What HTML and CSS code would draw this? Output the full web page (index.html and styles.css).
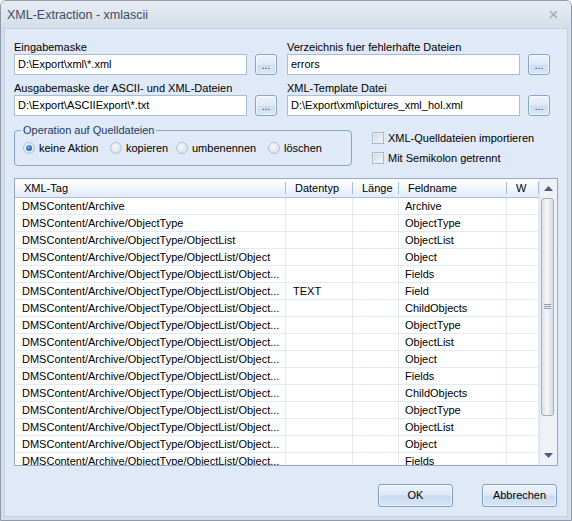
FILE: index.html
```html
<!DOCTYPE html>
<html>
<head>
<meta charset="utf-8">
<title>XML-Extraction - xmlascii</title>
<link rel="stylesheet" href="styles.css">
</head>
<body>
<div class="window">
  <div class="titlebar">
    <span class="title">XML-Extraction - xmlascii</span>
    <svg class="close" width="9" height="9" viewBox="0 0 9 9"><path d="M1 1 L8 8 M8 1 L1 8" stroke="#a3adbb" stroke-width="1.6"/></svg>
  </div>
  <div class="frame">
    <div class="client">
      <div class="paths">
        <div class="field">
          <div class="label">Eingabemaske</div>
          <div class="inrow"><div class="input">D:\Export\xml\*.xml</div><div class="browse">...</div></div>
        </div>
        <div class="field">
          <div class="label">Verzeichnis fuer fehlerhafte Dateien</div>
          <div class="inrow"><div class="input">errors</div><div class="browse">...</div></div>
        </div>
        <div class="field">
          <div class="label">Ausgabemaske der ASCII- und XML-Dateien</div>
          <div class="inrow"><div class="input">D:\Export\ASCIIExport\*.txt</div><div class="browse">...</div></div>
        </div>
        <div class="field">
          <div class="label">XML-Template Datei</div>
          <div class="inrow"><div class="input">D:\Export\xml\pictures_xml_hol.xml</div><div class="browse">...</div></div>
        </div>
      </div>

      <div class="options">
        <div class="group">
          <span class="legend">Operation auf Quelldateien</span>
          <div class="radio-item"><span class="radio checked"></span><span>keine Aktion</span></div>
          <div class="radio-item"><span class="radio"></span><span>kopieren</span></div>
          <div class="radio-item"><span class="radio"></span><span>umbenennen</span></div>
          <div class="radio-item"><span class="radio"></span><span>löschen</span></div>
        </div>
        <div class="checks">
          <div class="check-item"><span class="checkbox"></span><span>XML-Quelldateien importieren</span></div>
          <div class="check-item"><span class="checkbox"></span><span>Mit Semikolon getrennt</span></div>
        </div>
      </div>

      <div class="grid">
        <div class="table">
          <div class="head">
            <div class="hc c1">XML-Tag</div>
            <div class="hc c2">Datentyp</div>
            <div class="hc c3">Länge</div>
            <div class="hc c4">Feldname</div>
            <div class="hc c5">W</div>
          </div>
          <div class="body">
            <div class="row"><div class="c c1">DMSContent/Archive</div><div class="c c2"></div><div class="c c3"></div><div class="c c4">Archive</div><div class="c c5"></div></div>
            <div class="row"><div class="c c1">DMSContent/Archive/ObjectType</div><div class="c c2"></div><div class="c c3"></div><div class="c c4">ObjectType</div><div class="c c5"></div></div>
            <div class="row"><div class="c c1">DMSContent/Archive/ObjectType/ObjectList</div><div class="c c2"></div><div class="c c3"></div><div class="c c4">ObjectList</div><div class="c c5"></div></div>
            <div class="row"><div class="c c1">DMSContent/Archive/ObjectType/ObjectList/Object</div><div class="c c2"></div><div class="c c3"></div><div class="c c4">Object</div><div class="c c5"></div></div>
            <div class="row"><div class="c c1">DMSContent/Archive/ObjectType/ObjectList/Object...</div><div class="c c2"></div><div class="c c3"></div><div class="c c4">Fields</div><div class="c c5"></div></div>
            <div class="row"><div class="c c1">DMSContent/Archive/ObjectType/ObjectList/Object...</div><div class="c c2">TEXT</div><div class="c c3"></div><div class="c c4">Field</div><div class="c c5"></div></div>
            <div class="row"><div class="c c1">DMSContent/Archive/ObjectType/ObjectList/Object...</div><div class="c c2"></div><div class="c c3"></div><div class="c c4">ChildObjects</div><div class="c c5"></div></div>
            <div class="row"><div class="c c1">DMSContent/Archive/ObjectType/ObjectList/Object...</div><div class="c c2"></div><div class="c c3"></div><div class="c c4">ObjectType</div><div class="c c5"></div></div>
            <div class="row"><div class="c c1">DMSContent/Archive/ObjectType/ObjectList/Object...</div><div class="c c2"></div><div class="c c3"></div><div class="c c4">ObjectList</div><div class="c c5"></div></div>
            <div class="row"><div class="c c1">DMSContent/Archive/ObjectType/ObjectList/Object...</div><div class="c c2"></div><div class="c c3"></div><div class="c c4">Object</div><div class="c c5"></div></div>
            <div class="row"><div class="c c1">DMSContent/Archive/ObjectType/ObjectList/Object...</div><div class="c c2"></div><div class="c c3"></div><div class="c c4">Fields</div><div class="c c5"></div></div>
            <div class="row"><div class="c c1">DMSContent/Archive/ObjectType/ObjectList/Object...</div><div class="c c2"></div><div class="c c3"></div><div class="c c4">ChildObjects</div><div class="c c5"></div></div>
            <div class="row"><div class="c c1">DMSContent/Archive/ObjectType/ObjectList/Object...</div><div class="c c2"></div><div class="c c3"></div><div class="c c4">ObjectType</div><div class="c c5"></div></div>
            <div class="row"><div class="c c1">DMSContent/Archive/ObjectType/ObjectList/Object...</div><div class="c c2"></div><div class="c c3"></div><div class="c c4">ObjectList</div><div class="c c5"></div></div>
            <div class="row"><div class="c c1">DMSContent/Archive/ObjectType/ObjectList/Object...</div><div class="c c2"></div><div class="c c3"></div><div class="c c4">Object</div><div class="c c5"></div></div>
            <div class="row"><div class="c c1">DMSContent/Archive/ObjectType/ObjectList/Object...</div><div class="c c2"></div><div class="c c3"></div><div class="c c4">Fields</div><div class="c c5"></div></div>
          </div>
        </div>
        <div class="sb">
          <div class="sb-btn"><svg width="9" height="5" viewBox="0 0 9 5"><path d="M0 5 L4.5 0 L9 5 Z" fill="#4b5d7a"/></svg></div>
          <div class="sb-track">
            <div class="sb-thumb"><svg width="7" height="6" viewBox="0 0 7 6"><path d="M0 0.5 H7 M0 2.5 H7 M0 4.5 H7" stroke="#8d99aa" stroke-width="1"/></svg></div>
          </div>
          <div class="sb-btn"><svg width="9" height="5" viewBox="0 0 9 5"><path d="M0 0 L4.5 5 L9 0 Z" fill="#4b5d7a"/></svg></div>
        </div>
      </div>

      <div class="footer">
        <div class="btn">OK</div>
        <div class="btn">Abbrechen</div>
      </div>
    </div>
  </div>
</div>
</body>
</html>
```

FILE: styles.css
```css
* { box-sizing: border-box; }
html, body { margin: 0; padding: 0; }
body {
  width: 572px;
  height: 521px;
  overflow: hidden;
  font-family: "Liberation Sans", Arial, sans-serif;
  font-size: 11px;
  color: #000;
  background: #ffffff;
}

.window {
  width: 572px;
  height: 521px;
  border: 1px solid #8e9aab;
  border-radius: 6px 6px 0 0;
  background: #d4dde8;
  display: flex;
  flex-direction: column;
  overflow: hidden;
}

.titlebar {
  height: 27px;
  flex: none;
  display: flex;
  align-items: center;
  justify-content: space-between;
  padding: 0 13px 0 6px;
  background: linear-gradient(#e8edf3, #dbe3ec 60%, #d5dee9);
}
.title {
  font-size: 12.5px;
  color: #3c4c64;
}
.close { display: block; }

.frame {
  flex: 1;
  display: flex;
  padding: 0 3px 3px 3px;
}

.client {
  flex: 1;
  display: flex;
  flex-direction: column;
  background: #dfe9f7;
  border: 1px solid #c3d0e1;
  padding: 12px 9px 0 9px;
}

.paths {
  display: grid;
  grid-template-columns: 263px 263px;
  column-gap: 10px;
  row-gap: 7px;
}
.label {
  line-height: 13px;
  height: 13px;
  white-space: nowrap;
}
.inrow {
  display: flex;
  gap: 8px;
}
.input {
  width: 233px;
  height: 21px;
  background: #fff;
  border: 1px solid #a9bed5;
  padding: 0 3px;
  line-height: 19px;
  white-space: nowrap;
  overflow: hidden;
}
.browse {
  width: 22px;
  height: 21px;
  border: 1px solid #86a5c6;
  border-radius: 3px;
  background: linear-gradient(#eef4fc, #dce8f7 50%, #ccdcf0 52%, #dbe7f6);
  box-shadow: inset 0 0 0 1px rgba(255,255,255,0.6);
  text-align: center;
  line-height: 21px;
  font-size: 10px;
  color: #1e2a3a;
}

.options {
  display: flex;
  margin-top: 14px;
}
.group {
  position: relative;
  width: 338px;
  height: 36px;
  border: 1px solid #88a4c6;
  border-radius: 4px;
  padding-left: 8px;
  display: grid;
  grid-template-columns: 87px 66px 92px auto;
  align-items: center;
}
.legend {
  position: absolute;
  top: -7px;
  left: 6px;
  padding: 0 2px;
  line-height: 13px;
  background: #dfe9f7;
  color: #1b3a66;
}
.radio-item {
  display: flex;
  align-items: center;
  gap: 4px;
  white-space: nowrap;
}
.radio {
  width: 12px;
  height: 12px;
  border-radius: 50%;
  border: 1px solid #b4c2d3;
  background: radial-gradient(circle at 40% 35%, #f7f9fb, #dde3ea 70%, #cfd7e1);
  display: flex;
  align-items: center;
  justify-content: center;
}
.radio.checked::before {
  content: "";
  width: 6px;
  height: 6px;
  border-radius: 50%;
  background: radial-gradient(circle at 40% 35%, #6fb0f0, #1c5fb3 70%);
}

.checks {
  margin-left: 20px;
  display: flex;
  flex-direction: column;
  gap: 4px;
}
.check-item {
  height: 16px;
  display: flex;
  align-items: center;
  gap: 4px;
  white-space: nowrap;
}
.checkbox {
  width: 12px;
  height: 12px;
  border: 1px solid #a9b9cc;
  background: linear-gradient(135deg, #d2d8e0, #f3f5f8);
  box-shadow: inset 0 0 0 1px #e9edf2;
}

.grid {
  margin-top: 12px;
  height: 288px;
  border: 1px solid #93a8c4;
  background: #fff;
  display: flex;
  overflow: hidden;
}
.table {
  width: 524px;
  flex: none;
  display: flex;
  flex-direction: column;
  overflow: hidden;
}
.head {
  height: 19px;
  flex: none;
  display: flex;
  background: linear-gradient(#ffffff, #f3f7fc 45%, #e2ebf8);
  border-bottom: 1px solid #a9c0de;
}
.hc {
  position: relative;
  padding-left: 9px;
  line-height: 18px;
  white-space: nowrap;
  overflow: hidden;
}
.hc::after {
  content: "";
  position: absolute;
  right: 0;
  top: 3px;
  bottom: 3px;
  width: 1px;
  background: #a7c0e0;
}
.c1 { width: 271px; flex: none; }
.c2 { width: 67px; flex: none; }
.c3 { width: 46px; flex: none; }
.c4 { width: 108px; flex: none; }
.c5 { width: 32px; flex: none; }

.body {
  flex: 1;
  overflow: hidden;
}
.row {
  height: 17px;
  display: flex;
  border-bottom: 1px solid #e1eaf6;
}
.c {
  border-right: 1px solid #e1eaf6;
  padding-left: 7px;
  line-height: 16px;
  white-space: nowrap;
  overflow: hidden;
}
.c.c4 { padding-left: 6px; }

.sb {
  flex: 1;
  display: flex;
  flex-direction: column;
  background: #eef1f5;
  border-left: 1px solid #dfe5ed;
}
.sb-btn {
  height: 19px;
  flex: none;
  display: flex;
  align-items: center;
  justify-content: center;
}
.sb-track {
  flex: 1;
  padding: 0 3px 0 1px;
}
.sb-thumb {
  height: 218px;
  border: 1px solid #a3afbf;
  border-radius: 3px;
  background: linear-gradient(to right, #dbe1e8, #f4f6f9 45%, #e6eaef 70%, #d3dae3);
  display: flex;
  align-items: center;
  justify-content: center;
}
.sb-thumb svg { display: block; }

.footer {
  display: flex;
  justify-content: flex-end;
  gap: 29px;
  margin-top: 18px;
  margin-right: 1px;
}
.btn {
  width: 75px;
  height: 23px;
  border: 1px solid #7f9fc1;
  border-radius: 3px;
  background: linear-gradient(#edf3fc, #dde8f7 48%, #c9daf0 52%, #d7e5f6);
  box-shadow: inset 0 0 0 1px rgba(255,255,255,0.55);
  text-align: center;
  line-height: 21px;
  color: #000;
}
```
